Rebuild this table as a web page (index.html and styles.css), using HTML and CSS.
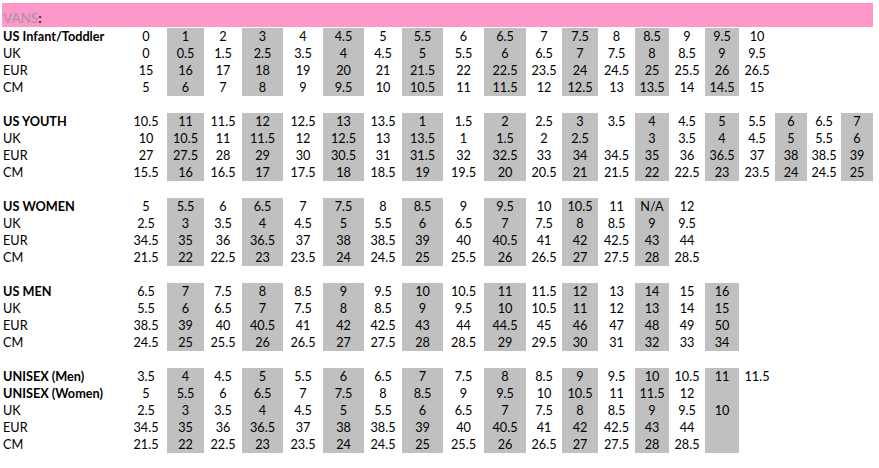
FILE: index.html
```html
<!DOCTYPE html>
<html>
<head>
<meta charset="utf-8">
<title>Vans size chart</title>
<link rel="stylesheet" href="styles.css">
</head>
<body>
<div class="sheet">
  <div class="banner"><span class="brand">VANS</span><span class="colon">:</span></div>
  <table class="chart">
    <colgroup>
      <col class="c-label">
      <col style="width:42px"><col style="width:37px"><col style="width:38px"><col style="width:41px"><col style="width:40px">
      <col style="width:41px"><col style="width:38px"><col style="width:41px"><col style="width:41px"><col style="width:42px">
      <col style="width:36px"><col style="width:36px"><col style="width:37px"><col style="width:34px"><col style="width:36px">
      <col style="width:34px"><col style="width:36px"><col style="width:32px"><col style="width:34px"><col style="width:32px">
    </colgroup>
    <tbody class="sec upto16">
      <tr><th>US Infant/Toddler</th><td>0</td><td>1</td><td>2</td><td>3</td><td>4</td><td>4.5</td><td>5</td><td>5.5</td><td>6</td><td>6.5</td><td>7</td><td>7.5</td><td>8</td><td>8.5</td><td>9</td><td>9.5</td><td>10</td><td></td><td></td><td></td></tr>
      <tr><th class="sub">UK</th><td>0</td><td>0.5</td><td>1.5</td><td>2.5</td><td>3.5</td><td>4</td><td>4.5</td><td>5</td><td>5.5</td><td>6</td><td>6.5</td><td>7</td><td>7.5</td><td>8</td><td>8.5</td><td>9</td><td>9.5</td><td></td><td></td><td></td></tr>
      <tr><th class="sub">EUR</th><td>15</td><td>16</td><td>17</td><td>18</td><td>19</td><td>20</td><td>21</td><td>21.5</td><td>22</td><td>22.5</td><td>23.5</td><td>24</td><td>24.5</td><td>25</td><td>25.5</td><td>26</td><td>26.5</td><td></td><td></td><td></td></tr>
      <tr><th class="sub">CM</th><td>5</td><td>6</td><td>7</td><td>8</td><td>9</td><td>9.5</td><td>10</td><td>10.5</td><td>11</td><td>11.5</td><td>12</td><td>12.5</td><td>13</td><td>13.5</td><td>14</td><td>14.5</td><td>15</td><td></td><td></td><td></td></tr>
    </tbody>
    <tbody class="gap"><tr><td colspan="21"></td></tr></tbody>
    <tbody class="sec upto20">
      <tr><th>US YOUTH</th><td>10.5</td><td>11</td><td>11.5</td><td>12</td><td>12.5</td><td>13</td><td>13.5</td><td>1</td><td>1.5</td><td>2</td><td>2.5</td><td>3</td><td>3.5</td><td>4</td><td>4.5</td><td>5</td><td>5.5</td><td>6</td><td>6.5</td><td>7</td></tr>
      <tr><th class="sub">UK</th><td>10</td><td>10.5</td><td>11</td><td>11.5</td><td>12</td><td>12.5</td><td>13</td><td>13.5</td><td>1</td><td>1.5</td><td>2</td><td>2.5</td><td></td><td>3</td><td>3.5</td><td>4</td><td>4.5</td><td>5</td><td>5.5</td><td>6</td></tr>
      <tr><th class="sub">EUR</th><td>27</td><td>27.5</td><td>28</td><td>29</td><td>30</td><td>30.5</td><td>31</td><td>31.5</td><td>32</td><td>32.5</td><td>33</td><td>34</td><td>34.5</td><td>35</td><td>36</td><td>36.5</td><td>37</td><td>38</td><td>38.5</td><td>39</td></tr>
      <tr><th class="sub">CM</th><td>15.5</td><td>16</td><td>16.5</td><td>17</td><td>17.5</td><td>18</td><td>18.5</td><td>19</td><td>19.5</td><td>20</td><td>20.5</td><td>21</td><td>21.5</td><td>22</td><td>22.5</td><td>23</td><td>23.5</td><td>24</td><td>24.5</td><td>25</td></tr>
    </tbody>
    <tbody class="gap"><tr><td colspan="21"></td></tr></tbody>
    <tbody class="sec upto14">
      <tr><th>US WOMEN</th><td>5</td><td>5.5</td><td>6</td><td>6.5</td><td>7</td><td>7.5</td><td>8</td><td>8.5</td><td>9</td><td>9.5</td><td>10</td><td>10.5</td><td>11</td><td>N/A</td><td>12</td><td></td><td></td><td></td><td></td><td></td></tr>
      <tr><th class="sub">UK</th><td>2.5</td><td>3</td><td>3.5</td><td>4</td><td>4.5</td><td>5</td><td>5.5</td><td>6</td><td>6.5</td><td>7</td><td>7.5</td><td>8</td><td>8.5</td><td>9</td><td>9.5</td><td></td><td></td><td></td><td></td><td></td></tr>
      <tr><th class="sub">EUR</th><td>34.5</td><td>35</td><td>36</td><td>36.5</td><td>37</td><td>38</td><td>38.5</td><td>39</td><td>40</td><td>40.5</td><td>41</td><td>42</td><td>42.5</td><td>43</td><td>44</td><td></td><td></td><td></td><td></td><td></td></tr>
      <tr><th class="sub">CM</th><td>21.5</td><td>22</td><td>22.5</td><td>23</td><td>23.5</td><td>24</td><td>24.5</td><td>25</td><td>25.5</td><td>26</td><td>26.5</td><td>27</td><td>27.5</td><td>28</td><td>28.5</td><td></td><td></td><td></td><td></td><td></td></tr>
    </tbody>
    <tbody class="gap"><tr><td colspan="21"></td></tr></tbody>
    <tbody class="sec upto16">
      <tr><th>US MEN</th><td>6.5</td><td>7</td><td>7.5</td><td>8</td><td>8.5</td><td>9</td><td>9.5</td><td>10</td><td>10.5</td><td>11</td><td>11.5</td><td>12</td><td>13</td><td>14</td><td>15</td><td>16</td><td></td><td></td><td></td><td></td></tr>
      <tr><th class="sub">UK</th><td>5.5</td><td>6</td><td>6.5</td><td>7</td><td>7.5</td><td>8</td><td>8.5</td><td>9</td><td>9.5</td><td>10</td><td>10.5</td><td>11</td><td>12</td><td>13</td><td>14</td><td>15</td><td></td><td></td><td></td><td></td></tr>
      <tr><th class="sub">EUR</th><td>38.5</td><td>39</td><td>40</td><td>40.5</td><td>41</td><td>42</td><td>42.5</td><td>43</td><td>44</td><td>44.5</td><td>45</td><td>46</td><td>47</td><td>48</td><td>49</td><td>50</td><td></td><td></td><td></td><td></td></tr>
      <tr><th class="sub">CM</th><td>24.5</td><td>25</td><td>25.5</td><td>26</td><td>26.5</td><td>27</td><td>27.5</td><td>28</td><td>28.5</td><td>29</td><td>29.5</td><td>30</td><td>31</td><td>32</td><td>33</td><td>34</td><td></td><td></td><td></td><td></td></tr>
    </tbody>
    <tbody class="gap"><tr><td colspan="21"></td></tr></tbody>
    <tbody class="sec upto16">
      <tr><th>UNISEX (Men)</th><td>3.5</td><td>4</td><td>4.5</td><td>5</td><td>5.5</td><td>6</td><td>6.5</td><td>7</td><td>7.5</td><td>8</td><td>8.5</td><td>9</td><td>9.5</td><td>10</td><td>10.5</td><td>11</td><td>11.5</td><td></td><td></td><td></td></tr>
      <tr><th>UNISEX (Women)</th><td>5</td><td>5.5</td><td>6</td><td>6.5</td><td>7</td><td>7.5</td><td>8</td><td>8.5</td><td>9</td><td>9.5</td><td>10</td><td>10.5</td><td>11</td><td>11.5</td><td>12</td><td></td><td></td><td></td><td></td><td></td></tr>
      <tr><th class="sub">UK</th><td>2.5</td><td>3</td><td>3.5</td><td>4</td><td>4.5</td><td>5</td><td>5.5</td><td>6</td><td>6.5</td><td>7</td><td>7.5</td><td>8</td><td>8.5</td><td>9</td><td>9.5</td><td>10</td><td></td><td></td><td></td><td></td></tr>
      <tr><th class="sub">EUR</th><td>34.5</td><td>35</td><td>36</td><td>36.5</td><td>37</td><td>38</td><td>38.5</td><td>39</td><td>40</td><td>40.5</td><td>41</td><td>42</td><td>42.5</td><td>43</td><td>44</td><td></td><td></td><td></td><td></td><td></td></tr>
      <tr><th class="sub">CM</th><td>21.5</td><td>22</td><td>22.5</td><td>23</td><td>23.5</td><td>24</td><td>24.5</td><td>25</td><td>25.5</td><td>26</td><td>26.5</td><td>27</td><td>27.5</td><td>28</td><td>28.5</td><td></td><td></td><td></td><td></td><td></td></tr>
    </tbody>
  </table>
</div>
</body>
</html>
```
FILE: styles.css
```css
html, body {
  margin: 0;
  padding: 0;
  background: #ffffff;
}

.sheet {
  padding: 3px 0 0 2px;
  width: 871px;
  font-family: Lato, "Open Sans", sans-serif;
  font-size: 12.7px;
  color: #000000;
}

.banner {
  height: 24px;
  background: #fe98ca;
  display: flex;
  align-items: flex-end;
  padding-left: 1px;
  padding-bottom: 1px;
  box-sizing: border-box;
  font-size: 13.5px;
  line-height: 16px;
}

.brand {
  color: #a494a6;
}

.colon {
  color: #4a1235;
  font-weight: 700;
}

.chart {
  margin-top: 1px;
  border-collapse: collapse;
  border-spacing: 0;
  table-layout: fixed;
  width: 871px;
}

.c-label {
  width: 123px;
}

.chart th,
.chart td {
  padding: 0;
  height: 17px;
  line-height: 17px;
  vertical-align: bottom;
  white-space: nowrap;
  overflow: visible;
}

.chart th {
  text-align: left;
  font-weight: 700;
  padding-left: 1px;
}

.chart th.sub {
  font-weight: 400;
}

.chart td {
  text-align: center;
}

/* shaded alternate size columns (even data columns), per section range */
.upto14 td:nth-child(2n+3):nth-child(-n+15),
.upto16 td:nth-child(2n+3):nth-child(-n+17),
.upto20 td:nth-child(2n+3):nth-child(-n+21) {
  background: #c0c0c0;
}
```
